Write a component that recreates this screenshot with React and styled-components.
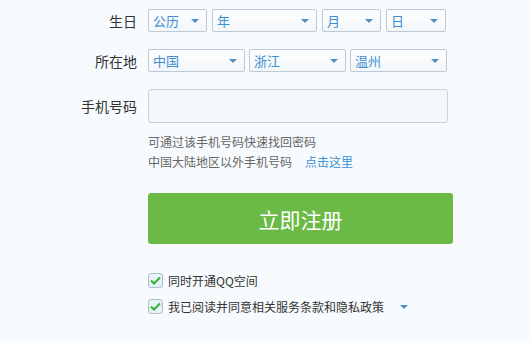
import React from "react";
import styled, { createGlobalStyle } from "styled-components";

const GlobalStyle = createGlobalStyle`
  html, body {
    margin: 0;
    padding: 0;
    background: #f7fbfe;
  }
  body {
    font-family: "Noto Sans CJK SC", "Liberation Sans", sans-serif;
    color: #333;
  }
`;

const Form = styled.div`
  padding-top: 9px;
  width: 530px;
  height: 341px;
  box-sizing: border-box;
`;

const Row = styled.div`
  display: flex;
  align-items: center;
  margin-bottom: ${(p) => p.gap || 0}px;
`;

const Label = styled.div`
  width: 137px;
  margin-right: 11px;
  text-align: right;
  font-size: 14px;
  color: #333;
  flex-shrink: 0;
`;

const Fields = styled.div`
  display: flex;
  gap: ${(p) => p.gap || 5}px;
`;

const Select = styled.div`
  position: relative;
  box-sizing: border-box;
  width: ${(p) => p.w}px;
  height: 23px;
  border: 1px solid #bccad6;
  border-radius: 2px;
  background: linear-gradient(#ffffff, #f2f6f9);
  color: #3d8fd1;
  font-size: 13px;
  line-height: 21px;
  padding-left: 4px;

  &::after {
    content: "";
    position: absolute;
    right: 7px;
    top: 9px;
    border-left: 4px solid transparent;
    border-right: 4px solid transparent;
    border-top: 4px solid #4a8fc8;
  }
`;

const Input = styled.input`
  box-sizing: border-box;
  width: 300px;
  height: 34px;
  border: 1px solid #c5d1db;
  border-radius: 3px;
  background: #f5f8fb;
  outline: none;
`;

const Hint = styled.div`
  margin-left: 148px;
  margin-top: 9px;
  font-size: 12px;
  line-height: 20px;
  color: #666;
`;

const Link = styled.a`
  color: #3b8fd3;
  margin-left: 13px;
  text-decoration: none;
`;

const SubmitButton = styled.button`
  display: block;
  margin: 21px 0 0 148px;
  width: 305px;
  height: 51px;
  border: none;
  border-radius: 3px;
  background: #6aba45;
  color: #fff;
  font-family: "Noto Sans CJK SC", sans-serif;
  font-size: 21px;
  cursor: pointer;
`;

const Checks = styled.div`
  margin: 29px 0 0 148px;
  display: flex;
  flex-direction: column;
  gap: 11px;
`;

const CheckRow = styled.label`
  display: flex;
  align-items: center;
  font-size: 12px;
  line-height: 15px;
  color: #333;
`;

const Box = styled.span`
  box-sizing: border-box;
  width: 15px;
  height: 15px;
  border: 1px solid #aebfcc;
  border-radius: 3px;
  background: #e9f1f7;
  margin-right: 5px;
  display: flex;
  align-items: center;
  justify-content: center;
`;

const Caret = styled.span`
  margin-left: 16px;
  width: 0;
  height: 0;
  border-left: 4px solid transparent;
  border-right: 4px solid transparent;
  border-top: 4px solid #4a8fc8;
`;

const Check = () => (
  <Box>
    <svg width="11" height="9" viewBox="0 0 11 9">
      <path d="M1 4.5 L4 7.5 L10 1.5" fill="none" stroke="#2fb52f" strokeWidth="2" />
    </svg>
  </Box>
);

export default function App() {
  return (
    <>
      <GlobalStyle />
      <Form>
        <Row gap={17}>
          <Label>生日</Label>
          <Fields>
            <Select w={59}>公历</Select>
            <Select w={105}>年</Select>
            <Select w={59}>月</Select>
            <Select w={60}>日</Select>
          </Fields>
        </Row>
        <Row gap={17}>
          <Label>所在地</Label>
          <Fields gap={4}>
            <Select w={97}>中国</Select>
            <Select w={97}>浙江</Select>
            <Select w={97}>温州</Select>
          </Fields>
        </Row>
        <Row>
          <Label>手机号码</Label>
          <Input />
        </Row>
        <Hint>
          <div>可通过该手机号码快速找回密码</div>
          <div>
            中国大陆地区以外手机号码<Link href="#">点击这里</Link>
          </div>
        </Hint>
        <SubmitButton>立即注册</SubmitButton>
        <Checks>
          <CheckRow>
            <Check />
            同时开通QQ空间
          </CheckRow>
          <CheckRow>
            <Check />
            我已阅读并同意相关服务条款和隐私政策
            <Caret />
          </CheckRow>
        </Checks>
      </Form>
    </>
  );
}
